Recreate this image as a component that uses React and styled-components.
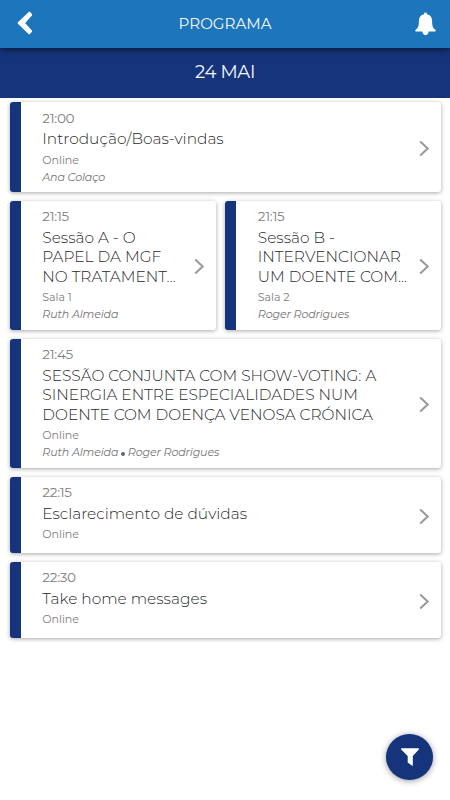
import React from 'react';
import styled, { createGlobalStyle } from 'styled-components';

const GlobalStyle = createGlobalStyle`
  * {
    box-sizing: border-box;
  }
  body {
    margin: 0;
    background: #fff;
    font-family: "Montserrat", "Inter", sans-serif;
  }
`;

const Page = styled.div`
  position: relative;
  display: flex;
  flex-direction: column;
  min-height: 100vh;
  overflow: hidden;
`;

const Header = styled.header`
  position: relative;
  z-index: 1;
  display: grid;
  grid-template-columns: 50px 1fr 50px;
  align-items: center;
  height: 48px;
  background: #1d75bc;
  box-shadow: 0 1px 7px rgba(0, 0, 0, 0.65);
`;

const HeaderTitle = styled.h1`
  margin: 0;
  color: #f4f9fd;
  font-size: 15.1px;
  font-weight: 400;
  line-height: 48px;
  text-align: center;
`;

const IconButton = styled.button`
  display: flex;
  align-items: center;
  justify-content: center;
  width: 50px;
  height: 48px;
  padding: ${({ $lift }) => `0 0 ${$lift}px`};
  border: none;
  background: none;
  color: #fff;
  cursor: pointer;
`;

const DateBar = styled.h2`
  margin: 0;
  height: 49.5px;
  background: #15347b;
  color: #f4f6fb;
  font-size: 18px;
  font-weight: 400;
  line-height: 49px;
  letter-spacing: -0.3px;
  text-align: center;
`;

const Schedule = styled.main`
  display: flex;
  flex-direction: column;
  gap: 8.5px;
  padding: 4.5px 9px 0 9.5px;
`;

const Slot = styled.div`
  display: grid;
  grid-template-columns: ${({ $parallel }) => ($parallel ? '206.5fr 216fr' : '1fr')};
  gap: 9px;
`;

const Card = styled.article`
  display: flex;
  align-items: center;
  justify-content: space-between;
  min-width: 0;
  height: ${({ $height }) => $height}px;
  padding-right: 11px;
  border-left: 11.5px solid #15347b;
  border-radius: 3px;
  background: #fff;
  box-shadow: 0 1px 4px rgba(0, 0, 0, 0.35);
`;

const Details = styled.div`
  align-self: flex-start;
  padding: 5.5px 0 0 21.8px;
  white-space: nowrap;
`;

const Time = styled.div`
  color: #808080;
  font-size: 13.6px;
  font-weight: 400;
  line-height: 20px;
  letter-spacing: -0.3px;
`;

const Title = styled.h3`
  margin: 1.5px 0 2px;
  color: #2a2a2a;
  font-size: 15.4px;
  font-weight: 300;
  line-height: 19.5px;
`;

const TitleLine = styled.span`
  display: block;
`;

const Room = styled.div`
  color: #808080;
  font-size: 11.1px;
  font-weight: 400;
  line-height: 18px;
  letter-spacing: -0.05px;
`;

const Speakers = styled.div`
  display: flex;
  align-items: center;
  color: #757575;
  font-size: 11.1px;
  font-style: italic;
  font-weight: 400;
  line-height: 17.5px;
  letter-spacing: -0.15px;
`;

const Bullet = styled.span`
  width: 4px;
  height: 4px;
  margin: 2px 3px 0 2.5px;
  border-radius: 50%;
  background: #666;
`;

const Arrow = styled.svg`
  flex: none;
  width: 11px;
  height: 17px;
  margin-top: 3px;
  fill: none;
  stroke: #999;
  stroke-width: 2;
`;

const FilterButton = styled.button`
  position: absolute;
  right: 17px;
  bottom: 20.5px;
  display: flex;
  align-items: center;
  justify-content: center;
  width: 47px;
  height: 46px;
  padding: 1px 0 0;
  border: none;
  border-radius: 50%;
  background: #15347b;
  color: #fff;
  box-shadow: 0 1px 6px rgba(0, 0, 0, 0.4);
  cursor: pointer;
`;

const slots = [
  [
    {
      time: '21:00',
      height: 90,
      title: ['Introdução/Boas-vindas'],
      room: 'Online',
      speakers: ['Ana Colaço'],
    },
  ],
  [
    {
      time: '21:15',
      height: 129.5,
      title: ['Sessão A - O', 'PAPEL DA MGF', 'NO TRATAMENT...'],
      room: 'Sala 1',
      speakers: ['Ruth Almeida'],
    },
    {
      time: '21:15',
      height: 129.5,
      title: ['Sessão B -', 'INTERVENCIONAR', 'UM DOENTE COM...'],
      room: 'Sala 2',
      speakers: ['Roger Rodrigues'],
    },
  ],
  [
    {
      time: '21:45',
      height: 129.5,
      title: [
        'SESSÃO CONJUNTA COM SHOW-VOTING: A',
        'SINERGIA ENTRE ESPECIALIDADES NUM',
        'DOENTE COM DOENÇA VENOSA CRÓNICA',
      ],
      room: 'Online',
      speakers: ['Ruth Almeida', 'Roger Rodrigues'],
    },
  ],
  [
    {
      time: '22:15',
      height: 76.5,
      title: ['Esclarecimento de dúvidas'],
      room: 'Online',
      speakers: [],
    },
  ],
  [
    {
      time: '22:30',
      height: 76.5,
      title: ['Take home messages'],
      room: 'Online',
      speakers: [],
    },
  ],
];

function SessionCard({ session }) {
  return (
    <Card $height={session.height}>
      <Details>
        <Time>{session.time}</Time>
        <Title>
          {session.title.map((line) => (
            <TitleLine key={line}>{line}</TitleLine>
          ))}
        </Title>
        <Room>{session.room}</Room>
        {session.speakers.length > 0 && (
          <Speakers>
            {session.speakers.map((speaker, index) => (
              <React.Fragment key={speaker}>
                {index > 0 && <Bullet />}
                <span>{speaker}</span>
              </React.Fragment>
            ))}
          </Speakers>
        )}
      </Details>
      <Arrow viewBox="0 0 11 17">
        <path d="M1.2 1.5 L8.7 8.5 L1.2 15.5" />
      </Arrow>
    </Card>
  );
}

export default function App() {
  return (
    <>
      <GlobalStyle />
      <Page>
        <Header>
          <IconButton $lift={3} aria-label="Voltar">
            <svg width="16" height="24" viewBox="0 0 16 24" fill="currentColor" stroke="currentColor" strokeLinejoin="round" strokeWidth="2">
              <path d="M12.4 1.6 L14.2 3.9 L6.8 12 L14.2 20.1 L12.2 22.3 L1.6 12 Z" />
            </svg>
          </IconButton>
          <HeaderTitle>PROGRAMA</HeaderTitle>
          <IconButton $lift={0} aria-label="Notificações">
            <svg width="21" height="24" viewBox="0 0 21 24" fill="currentColor">
              <path d="M10.5 0.6 C11.4 0.6 12 1.2 12 2.2 C15.3 2.9 17.1 5.4 17.1 8.8 C17.1 14.5 18 16.3 20.5 18 C21.1 18.6 20.8 19.6 19.9 19.6 H13.6 C13.6 21.6 12.4 23.2 10.5 23.2 C8.6 23.2 7.4 21.6 7.4 19.6 H1.1 C0.2 19.6 -0.1 18.6 0.5 18 C3 16.3 3.9 14.5 3.9 8.8 C3.9 5.4 5.7 2.9 9 2.2 C9 1.2 9.6 0.6 10.5 0.6 Z" />
            </svg>
          </IconButton>
        </Header>
        <DateBar>24 MAI</DateBar>
        <Schedule>
          {slots.map((sessions, index) => (
            <Slot key={index} $parallel={sessions.length > 1}>
              {sessions.map((session) => (
                <SessionCard key={session.title[0]} session={session} />
              ))}
            </Slot>
          ))}
        </Schedule>
        <FilterButton aria-label="Filtrar">
          <svg width="18" height="18" viewBox="0 0 18 18" fill="currentColor">
            <path d="M0.6 0.3 H17.4 C18 0.3 18.2 1.1 17.8 1.6 L11.8 8 V17.2 C11.8 17.8 11.2 17.9 10.8 17.6 L6.7 14.6 V8 L0.2 1.6 C-0.2 1.1 0 0.3 0.6 0.3 Z" />
          </svg>
        </FilterButton>
      </Page>
    </>
  );
}
